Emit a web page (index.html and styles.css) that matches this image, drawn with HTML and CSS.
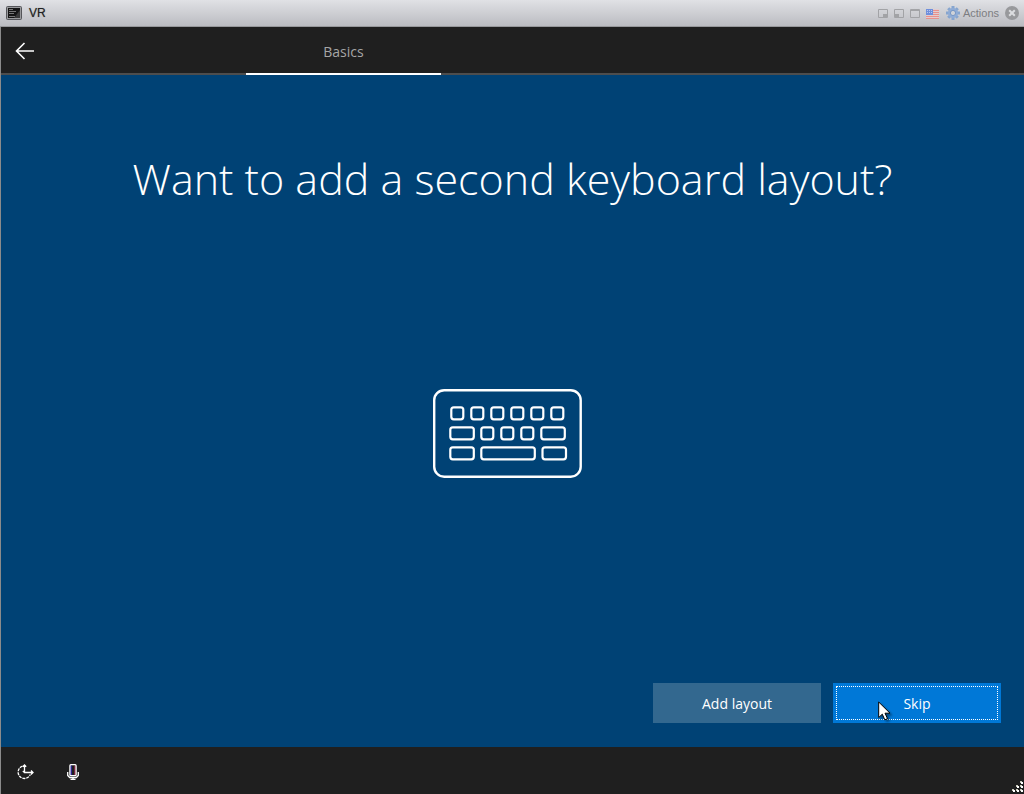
FILE: index.html
```
<!DOCTYPE html>
<html lang="en">
<head>
  <meta charset="UTF-8">
  <meta name="viewport" content="width=device-width, initial-scale=1.0">
  <title>VR</title>
  <link rel="stylesheet" href="styles.css">
</head>
<body>
  <div class="console">
    <header class="titlebar">
      <svg class="vm-icon" width="16" height="14" viewBox="0 0 16 14" aria-hidden="true">
        <rect x="0.500" y="0.500" width="15" height="13" rx="1" fill="#999a9d" stroke="#55565a"/>
        <path d="M2 2h12v10H2z" fill="#151515"/>
        <path d="M8 12 14 4v8z" fill="#3a3a3a"/>
        <path d="M3 3.500h4M3 5.500h7M3 7.500h5M3 10.500h6" stroke="#777"/>
      </svg>
      <span class="vm-name">VR</span>
      <div class="window-tools">
        <button type="button" class="tool" aria-label="Minimize">
          <svg width="10" height="9" viewBox="0 0 10 9"><path d="M0.500 0.500h9v8h-9z" fill="none" stroke="#a2a3a6"/><path d="M5 5h4v3H5z" fill="#a2a3a6"/></svg>
        </button>
        <button type="button" class="tool" aria-label="Dock">
          <svg width="10" height="9" viewBox="0 0 10 9"><path d="M0.500 0.500h9v8h-9z" fill="none" stroke="#a2a3a6"/><path d="M1 5h4v3H1z" fill="#a2a3a6"/></svg>
        </button>
        <button type="button" class="tool" aria-label="Maximize">
          <svg width="10" height="9" viewBox="0 0 10 9"><path d="M0.500 0.500h9v8h-9zM0 1.500h10" fill="none" stroke="#a2a3a6"/></svg>
        </button>
        <button type="button" class="tool flag" aria-label="Keyboard layout: US">
          <svg width="14" height="10" viewBox="0 0 14 10">
            <path d="M0 0h13v10H0z" fill="#e3cccf"/>
            <path d="M0 1.500h13M0 3.500h13M0 5.500h13M0 7.500h13M0 9.500h13" stroke="#e8908c"/>
            <path d="M0 0h7v6H0z" fill="#6f8fdc"/>
            <path d="M1 1.500h5M1 3.500h5" stroke="#b9c8ee" stroke-dasharray="1 1"/>
          </svg>
        </button>
        <button type="button" class="tool actions">
          <svg width="14" height="14" viewBox="0 0 14 14">
            <g stroke="#86a5cf" stroke-width="3"><path d="M7 0v14M0 7h14M2.200 2.200l9.600 9.600M11.800 2.200l-9.600 9.600"/></g>
            <circle cx="7" cy="7" r="5" fill="#8facd6"/>
            <circle cx="7" cy="7" r="2.600" fill="#d0d3d8" stroke="#7797c5"/>
          </svg>
          <span>Actions</span>
        </button>
        <button type="button" class="tool" aria-label="Close">
          <svg width="14" height="14" viewBox="0 0 14 14"><circle cx="7" cy="7" r="7" fill="#98999c"/><path d="M4.200 4.200l5.600 5.600M9.800 4.200l-5.600 5.600" stroke="#dcdde0" stroke-width="2"/></svg>
        </button>
      </div>
    </header>

    <nav class="steps">
      <button type="button" class="back" aria-label="Back">
        <svg width="20" height="18" viewBox="0 0 20 18"><path d="M9.500 1 1.500 9l8 8M1.500 9H19" fill="none" stroke="#fff" stroke-width="1.600"/></svg>
      </button>
      <a href="#basics" class="step">Basics</a>
    </nav>

    <main class="setup" id="basics">
      <h1>Want to add a second keyboard layout?</h1>
      <div class="picture">
        <svg width="160" height="90" viewBox="433 389 160 90" fill="none" stroke="#fff" stroke-width="2.200" aria-hidden="true">
          <rect x="434.200" y="390.200" width="146.500" height="86.500" rx="10" stroke-width="2.400"/>
          <!-- top row -->
          <rect x="451.300" y="407.300" width="12" height="12" rx="2.500"/>
          <rect x="471.300" y="407.300" width="12" height="12" rx="2.500"/>
          <rect x="491.300" y="407.300" width="12" height="12" rx="2.500"/>
          <rect x="511.300" y="407.300" width="12" height="12" rx="2.500"/>
          <rect x="531.300" y="407.300" width="12" height="12" rx="2.500"/>
          <rect x="551.300" y="407.300" width="12" height="12" rx="2.500"/>
          <!-- middle row -->
          <rect x="450.300" y="427.300" width="23.500" height="12" rx="2.500"/>
          <rect x="481.300" y="427.300" width="12" height="12" rx="2.500"/>
          <rect x="501.300" y="427.300" width="12" height="12" rx="2.500"/>
          <rect x="521.300" y="427.300" width="12" height="12" rx="2.500"/>
          <rect x="541.300" y="427.300" width="23.500" height="12" rx="2.500"/>
          <!-- bottom row -->
          <rect x="450.300" y="447.300" width="23.500" height="12" rx="2.500"/>
          <rect x="481.300" y="447.300" width="53.500" height="12" rx="2.500"/>
          <rect x="542.500" y="447.300" width="23.500" height="12" rx="2.500"/>
        </svg>
      </div>
      <div class="buttons">
        <button type="button" class="btn">Add layout</button>
        <button type="button" class="btn primary">Skip
          <svg class="pointer" width="13" height="20" viewBox="0 0 13 20" aria-hidden="true"><path d="M0.700 1v15.500l3.600-3.300 2.500 5.600 2.700-1.200-2.500-5.400h5z" fill="#fff" stroke="#000"/></svg>
        </button>
      </div>
    </main>

    <footer class="taskbar">
      <button type="button" aria-label="Ease of access">
        <svg width="19" height="16" viewBox="0 0 19 16" fill="none" stroke="#fff" stroke-width="1.300">
          <path d="M6.500 2.200A6.300 6.300 0 1 0 14.300 10.500" stroke-dasharray="3 0.900"/>
          <path d="M8.500 1v7.500H17M6.800 2.700 8.500 1l1.700 1.700M15 6.500l2 2-2 2M6.800 7l1.700 1.500"/>
        </svg>
      </button>
      <button type="button" aria-label="Microphone">
        <svg width="12" height="16" viewBox="0 0 12 16" fill="none" stroke="#fff">
          <path d="M4 1.500v9.500" stroke="#3c2cff"/>
          <path d="M8 1.500v9.500" stroke="#d03060"/>
          <rect x="2.900" y="0.700" width="6.200" height="11" rx="1" stroke-width="1.300"/>
          <path d="M0.700 8v3.500l2 2h6.600l2-2V8M6 13.500v2M3.500 15.400h5" stroke-width="1.300"/>
        </svg>
      </button>
      <svg class="grip" width="12" height="12" viewBox="0 0 12 12" aria-hidden="true">
        <path d="M8 0h2v2H8zM4 4h2v2H4zM8 4h2v2H8zM0 8h2v2H0zM4 8h2v2H4zM8 8h2v2H8z" fill="#c9c9ba"/>
        <path d="M9 1h2v2H9zM5 5h2v2H5zM9 5h2v2H9zM1 9h2v2H1zM5 9h2v2H5zM9 9h2v2H9z" fill="#fff"/>
      </svg>
    </footer>
  </div>
</body>
</html>
```

FILE: styles.css
```
* {
  margin: 0;
  padding: 0;
  box-sizing: border-box;
}

body {
  background: #1f1f1f;
  color: #fff;
  font-family: "Open Sans", "Noto Sans", sans-serif;
  font-size: 14px;
}

button {
  background: none;
  border: none;
  color: inherit;
  font: inherit;
}

svg {
  display: block;
}

.console {
  display: flex;
  flex-direction: column;
  min-height: 100vh;
}

/* Console title bar */
.titlebar {
  display: flex;
  align-items: center;
  gap: 7px;
  height: 27px;
  padding: 0 5px 0 6px;
  background: linear-gradient(#e0e1e5, #bbbcc1);
  border-bottom: 1px solid #97989b;
  font-family: "Liberation Sans", Arial, sans-serif;
}

.vm-name {
  color: #222;
  font-size: 12px;
  text-shadow: 0 0 1px #777;
}

.window-tools {
  display: flex;
  align-items: center;
  gap: 6px;
  margin-left: auto;
  color: #7c7d81;
  font-size: 11px;
}

.flag {
  padding-top: 2px;
}

.actions {
  display: flex;
  align-items: center;
  gap: 3px;
}

/* Setup steps */
.steps {
  display: flex;
  height: 48px;
  background: #1f1f1f;
  border-left: 1px solid #8b8b8b;
  box-shadow: inset 0 -2px #4d4d4d;
}

.back {
  display: flex;
  align-items: center;
  width: 48px;
  padding-left: 14px;
}

.step {
  width: 195px;
  margin-left: 197px;
  padding-top: 3px;
  border-bottom: 2px solid #fff;
  color: #a6a6a6;
  line-height: 44px;
  text-align: center;
  text-decoration: none;
}

.setup {
  flex: 1;
  display: flex;
  flex-direction: column;
  padding: 72px 23px 24px;
  background: #004275;
  border-left: 1px solid #8b8b8b;
}

.setup h1 {
  font-size: 43px;
  font-weight: 300;
  line-height: 64px;
  text-align: center;
}

.picture {
  flex: 1;
  display: flex;
  align-items: center;
  justify-content: center;
  padding-bottom: 26px;
}

.buttons {
  display: flex;
  justify-content: flex-end;
  gap: 12px;
}

.btn {
  position: relative;
  width: 168px;
  height: 40px;
  background: #33688f;
}

.btn.primary {
  background: #0078d7;
  outline: 1px dotted #fff;
  outline-offset: -4px;
}

.pointer {
  position: absolute;
  left: 45px;
  top: 18px;
  filter: drop-shadow(2px 2px 1px rgba(0, 0, 0, 0.4));
}

/* Bottom bar */
.taskbar {
  position: relative;
  display: flex;
  align-items: center;
  gap: 32px;
  height: 47px;
  padding: 3px 15px 0;
  background: #1f1f1f;
  border-left: 1px solid #8b8b8b;
}

.grip {
  position: absolute;
  right: 0;
  bottom: 1px;
}
```
